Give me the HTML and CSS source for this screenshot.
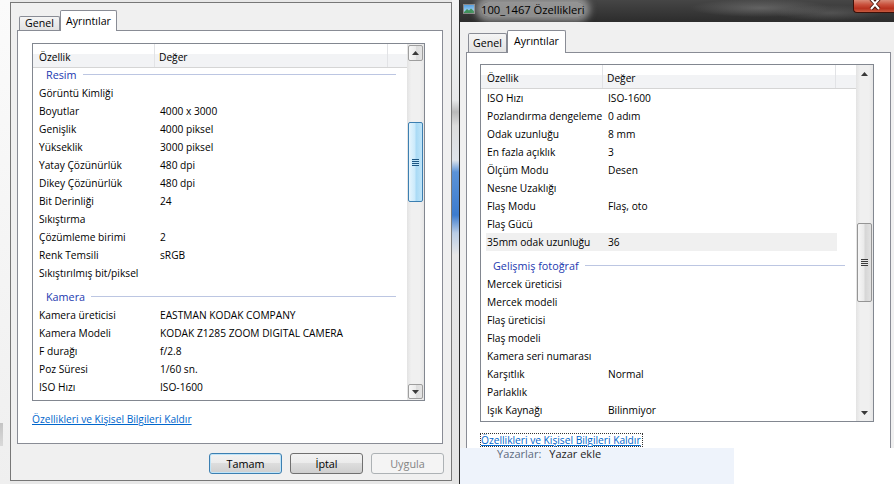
FILE: index.html
```html
<!DOCTYPE html>
<html lang="tr">
<head>
<meta charset="utf-8">
<title>100_1467 Özellikleri</title>
<link rel="stylesheet" href="styles.css">
</head>
<body>
<div class="screen">
  <div class="edge"></div>

  <section class="dlg-l">
    <div class="tabs">
      <div class="tab">Genel</div>
      <div class="tab sel">Ayrıntılar</div>
    </div>
    <div class="panel">
      <div class="list">
        <div class="lc">
          <div class="lhead"><div class="h1">Özellik</div><div class="h2">Değer</div><div class="h3"></div></div>
          <div class="rows scrolled">
            <div class="grp"><span>Resim</span><i></i></div>
            <div class="row"><span class="c1">Görüntü Kimliği</span><span class="c2"></span></div>
            <div class="row"><span class="c1">Boyutlar</span><span class="c2">4000 x 3000</span></div>
            <div class="row"><span class="c1">Genişlik</span><span class="c2">4000 piksel</span></div>
            <div class="row"><span class="c1">Yükseklik</span><span class="c2">3000 piksel</span></div>
            <div class="row"><span class="c1">Yatay Çözünürlük</span><span class="c2">480 dpi</span></div>
            <div class="row"><span class="c1">Dikey Çözünürlük</span><span class="c2">480 dpi</span></div>
            <div class="row"><span class="c1">Bit Derinliği</span><span class="c2">24</span></div>
            <div class="row"><span class="c1">Sıkıştırma</span><span class="c2"></span></div>
            <div class="row"><span class="c1">Çözümleme birimi</span><span class="c2">2</span></div>
            <div class="row"><span class="c1">Renk Temsili</span><span class="c2">sRGB</span></div>
            <div class="row"><span class="c1">Sıkıştırılmış bit/piksel</span><span class="c2"></span></div>
            <div class="grp"><span>Kamera</span><i></i></div>
            <div class="row"><span class="c1">Kamera üreticisi</span><span class="c2">EASTMAN KODAK COMPANY</span></div>
            <div class="row"><span class="c1">Kamera Modeli</span><span class="c2">KODAK Z1285 ZOOM DIGITAL CAMERA</span></div>
            <div class="row"><span class="c1">F durağı</span><span class="c2">f/2.8</span></div>
            <div class="row"><span class="c1">Poz Süresi</span><span class="c2">1/60 sn.</span></div>
            <div class="row"><span class="c1">ISO Hızı</span><span class="c2">ISO-1600</span></div>
          </div>
        </div>
        <div class="sb sb-l">
          <div class="sbtn box"><svg width="7" height="4" viewBox="0 0 7 4"><polygon points="0,4 3.5,0 7,4" fill="#3a3a3a"/></svg></div>
          <div class="thumb thumb-blue"><span class="grip"></span></div>
          <div class="sbtn box down"><svg width="7" height="4" viewBox="0 0 7 4"><polygon points="0,0 7,0 3.5,4" fill="#3a3a3a"/></svg></div>
        </div>
      </div>
      <a class="link link-l" href="#">Özellikleri ve Kişisel Bilgileri Kaldır</a>
    </div>
    <div class="buttons">
      <button class="btn def">Tamam</button>
      <button class="btn">İptal</button>
      <button class="btn dis">Uygula</button>
    </div>
  </section>

  <div class="glass"></div>

  <section class="win">
    <header class="title">
      <svg class="ticon" width="12" height="10" viewBox="0 0 12 10">
        <defs><linearGradient id="sky" x1="0" y1="0" x2="0" y2="1"><stop offset="0" stop-color="#4d9be0"/><stop offset="1" stop-color="#bfe3f7"/></linearGradient></defs>
        <rect x="0.5" y="0.5" width="11" height="9" fill="url(#sky)" stroke="#8a8a8a"/>
        <polygon points="1,8 4,5 6,6.5 8,4.5 11,7 11,9 1,9" fill="#3f8f5a"/>
      </svg>
      <span class="ttext">100_1467 Özellikleri</span>
      <div class="close"><svg width="14" height="10" viewBox="0 0 14 10"><path d="M3 -1 L7 3 L11 -1 M3 9 L7 5 L11 9" stroke="#4a1a12" stroke-width="4" fill="none"/><path d="M3 -1 L7 3.5 L11 -1 M3 9 L7 4.5 L11 9" stroke="#fff" stroke-width="2" fill="none"/></svg></div>
    </header>
    <div class="wbody">
      <div class="tabs">
        <div class="tab">Genel</div>
        <div class="tab sel">Ayrıntılar</div>
      </div>
      <div class="panel">
        <div class="list">
          <div class="lc">
            <div class="lhead"><div class="h1">Özellik</div><div class="h2">Değer</div><div class="h3"></div></div>
            <div class="rows">
              <div class="row"><span class="c1">ISO Hızı</span><span class="c2">ISO-1600</span></div>
              <div class="row"><span class="c1">Pozlandırma dengeleme</span><span class="c2">0 adım</span></div>
              <div class="row"><span class="c1">Odak uzunluğu</span><span class="c2">8 mm</span></div>
              <div class="row"><span class="c1">En fazla açıklık</span><span class="c2">3</span></div>
              <div class="row"><span class="c1">Ölçüm Modu</span><span class="c2">Desen</span></div>
              <div class="row"><span class="c1">Nesne Uzaklığı</span><span class="c2"></span></div>
              <div class="row"><span class="c1">Flaş Modu</span><span class="c2">Flaş, oto</span></div>
              <div class="row"><span class="c1">Flaş Gücü</span><span class="c2"></span></div>
              <div class="row hl"><span class="c1">35mm odak uzunluğu</span><span class="c2">36</span></div>
              <div class="grp"><span>Gelişmiş fotoğraf</span><i></i></div>
              <div class="row"><span class="c1">Mercek üreticisi</span><span class="c2"></span></div>
              <div class="row"><span class="c1">Mercek modeli</span><span class="c2"></span></div>
              <div class="row"><span class="c1">Flaş üreticisi</span><span class="c2"></span></div>
              <div class="row"><span class="c1">Flaş modeli</span><span class="c2"></span></div>
              <div class="row"><span class="c1">Kamera seri numarası</span><span class="c2"></span></div>
              <div class="row"><span class="c1">Karşıtlık</span><span class="c2">Normal</span></div>
              <div class="row"><span class="c1">Parlaklık</span><span class="c2"></span></div>
              <div class="row"><span class="c1">Işık Kaynağı</span><span class="c2">Bilinmiyor</span></div>
            </div>
          </div>
          <div class="sb sb-r">
            <div class="sbtn"><svg width="7" height="4" viewBox="0 0 7 4"><polygon points="0,4 3.5,0 7,4" fill="#3a3a3a"/></svg></div>
            <div class="thumb thumb-gray"><span class="grip"></span></div>
            <div class="sbtn down"><svg width="7" height="4" viewBox="0 0 7 4"><polygon points="0,0 7,0 3.5,4" fill="#3a3a3a"/></svg></div>
          </div>
        </div>
        <a class="link link-r" href="#">Özellikleri ve Kişisel Bilgileri Kaldır</a>
      </div>
    </div>
    <div class="info">
      <div class="infobox"><span class="lbl">Yazarlar:</span><span class="val">Yazar ekle</span></div>
    </div>
  </section>
</div>
</body>
</html>
```

FILE: styles.css
```css
* { box-sizing: border-box; }
html, body { margin: 0; padding: 0; }
body {
  width: 894px;
  height: 484px;
  overflow: hidden;
  background: #e8e8e8;
  font-family: "Open Sans", "Noto Sans", sans-serif;
  font-size: 10.2px;
  color: #000;
}
.screen { display: flex; height: 484px; }

.edge {
  width: 10px;
  background:
    linear-gradient(to bottom, transparent 423px, #c4c4c4 423px, #dadada 446px, transparent 446px) 0 0 / 3px 100% no-repeat,
    linear-gradient(#fbfbfb, #efefef);
}

/* ---------- left dialog ---------- */
.dlg-l {
  width: 442px;
  height: 479px;
  margin-top: 2px;
  border: 1px solid #777;
  background: #f0f0f0;
  padding: 7px 8px 0 6px;
  display: flex;
  flex-direction: column;
}

.tabs { display: flex; align-items: flex-end; padding-left: 2px; }
.tab {
  border: 1px solid #898c95;
  border-bottom: none;
  border-radius: 2px 2px 0 0;
  background: linear-gradient(#f5f5f5, #e2e2e2);
  text-align: center;
  white-space: nowrap;
  font-size: 10.6px;
}
.tab.sel {
  background: #fff;
  margin-bottom: -1px;
  position: relative;
  z-index: 1;
}
.dlg-l .tabs { height: 20px; }
.dlg-l .tab { width: 41px; height: 14px; line-height: 13px; }
.dlg-l .tab.sel { width: 57px; height: 21px; line-height: 20px; }

.panel {
  background: #fff;
  border: 1px solid #898c95;
  display: flex;
  flex-direction: column;
  align-items: flex-start;
}
.dlg-l .panel { height: 414px; padding: 12px 0 0 14px; }

.list {
  width: 393px;
  height: 358px;
  border: 1px solid #828790;
  display: flex;
  background: #fff;
  flex: none;
}
.win .list { width: 394px; }
.lc { flex: 1; min-width: 0; overflow: hidden; display: flex; flex-direction: column; }
.lhead {
  height: 24px;
  flex: none;
  display: flex;
  border-bottom: 1px solid #d5d5d5;
  background: linear-gradient(#fff 0, #fff 10px, #f2f3f5 10px, #f2f3f5 100%);
  line-height: 26px;
}
.h1 { width: 122px; padding-left: 6px; border-right: 1px solid #e2e3e6; }
.h2 { width: 233px; padding-left: 4px; border-right: 1px solid #e2e3e6; }
.h3 { flex: 1; }

.rows { display: flex; flex-direction: column; }
.rows.scrolled { margin-top: -8px; }
.row {
  display: flex;
  height: 18px;
  line-height: 18px;
  margin-left: 5px;
  width: 351px;
  flex: none;
  white-space: nowrap;
}
.row.hl { background: #f0f0f0; }
.c1 { width: 117px; padding-left: 1px; overflow: hidden; }
.c2 { flex: 1; padding-left: 5px; overflow: hidden; }

.grp {
  height: 24px;
  flex: none;
  display: flex;
  align-items: center;
  padding: 4px 11px 0 13px;
  color: #2339b0;
  font-size: 10.8px;
}
.win .grp { padding-left: 12px; }
.grp i { flex: 1; height: 1px; background: #bcc6e2; margin-left: 6px; }

/* scrollbars */
.sb {
  width: 17px;
  flex: none;
  display: flex;
  flex-direction: column;
  background: linear-gradient(90deg, #e3e3e3, #f0f0f0 25%, #f0f0f0 75%, #e6e6e6);
}
.sbtn {
  height: 17px;
  flex: none;
  display: flex;
  align-items: center;
  justify-content: center;
}
.sbtn svg { display: block; }
.sbtn.down { margin-top: auto; }
.sbtn.box {
  margin: 1px 1px 0;
  height: 16px;
  border: 1px solid #9e9e9e;
  border-radius: 2px;
  background: linear-gradient(90deg, #f7f7f7, #ececec 50%, #dcdcdc 50%, #e4e4e4);
}
.sbtn.box.down { margin: auto 1px 1px; height: 15px; }
.thumb {
  margin: 0 1px;
  border-radius: 2px;
  display: flex;
  align-items: center;
  justify-content: center;
  flex: none;
}
.sb-l .thumb { margin-top: 61px; height: 80px; }
.sb-r .thumb { margin-top: 141px; height: 79px; }
.thumb-blue {
  border: 1px solid #3c7fb1;
  background: linear-gradient(90deg, #e6f5fd, #cbeafb 45%, #a9daf5 55%, #bfe5f9);
}
.thumb-gray {
  border: 1px solid #959595;
  background: linear-gradient(90deg, #f6f6f6, #eaeaea 45%, #d6d6d6 55%, #e2e2e2);
}
.grip { width: 7px; height: 7px; }
.thumb-blue .grip { background: repeating-linear-gradient(#1d5784 0 1px, #bfe6fa 1px 2px); }
.thumb-gray .grip { background: repeating-linear-gradient(#3b3b3b 0 1px, #e6e6e6 1px 2px); }

.link { color: #0066cc; white-space: nowrap; line-height: 14px; }
.link-l { margin-top: 11px; text-decoration: underline; }

/* buttons */
.buttons {
  display: flex;
  justify-content: flex-end;
  gap: 8px;
  margin: 9px -1px 0 0;
}
.btn {
  width: 73px;
  height: 21px;
  border: 1px solid #707070;
  border-radius: 3px;
  background: linear-gradient(#f2f2f2 0, #ebebeb 50%, #dddddd 50%, #cfcfcf 100%);
  font: inherit;
  font-size: 10.8px;
  color: #000;
  padding: 0;
}
.btn.def { border-color: #3c7fb1; box-shadow: inset 0 0 0 1px #bfe4f8; }
.btn.dis { border-color: #adb2b5; background: #f4f4f4; color: #838383; }

/* glass strip */
.glass {
  width: 7px;
  background: linear-gradient(#f3f3f3 0, #e7e8e9 100px, #b9b9b9 112px, #dcdcdc 126px, #dfe4ea 160px, #5b93d8 172px, #3d7ccf 215px, #b9cde6 233px, #e6e6e6 255px, #e4e4e4 100%);
}

/* ---------- right window ---------- */
.win {
  width: 435px;
  border-left: 1px solid #2b2b2b;
  display: flex;
  flex-direction: column;
}
.title {
  height: 22px;
  flex: none;
  display: flex;
  align-items: flex-start;
  background:
    radial-gradient(ellipse 70px 9px at 300px 8px, rgba(130,130,130,.55), transparent),
    radial-gradient(ellipse 55px 8px at 370px 13px, rgba(110,110,110,.5), transparent),
    linear-gradient(#464646, #2c2c2c);
}
.ticon { margin: 4px 0 0 3px; flex: none; }
.ttext {
  margin: 2px 0 0 6px;
  font-size: 11.2px;
  line-height: 15px;
  color: #000;
  background: rgba(215,215,215,.55);
  box-shadow: 0 0 7px 5px rgba(215,215,215,.55);
  border-radius: 8px;
  white-space: nowrap;
}
.close {
  margin-left: auto;
  width: 41px;
  height: 13px;
  border: 1px solid #3d1008;
  border-top: none;
  border-right: none;
  border-radius: 0 0 0 4px;
  background: linear-gradient(#d98a77, #c94f3b 40%, #b8321f 70%, #c65a3f);
  display: flex;
  justify-content: center;
  padding-left: 2px;
}
.close svg { display: block; }

.wbody {
  height: 426px;
  flex: none;
  background: #f0f0f0;
  padding: 8px 0 0 6px;
  display: flex;
  flex-direction: column;
  overflow: hidden;
}
.wbody .tabs { height: 22px; }
.wbody .tab { width: 39px; height: 19px; line-height: 19px; }
.wbody .tab.sel { width: 59px; height: 23px; line-height: 21px; }
.wbody .panel {
  width: 425px;
  flex: 1;
  border-bottom: none;
  padding: 11px 0 0 13px;
}
.link-r {
  margin-top: 11px;
  border: 1px dotted #333;
  padding: 0 1px 0 0;
  line-height: 12px;
}

.info { height: 36px; flex: none; background: #fff; display: flex; }
.infobox {
  width: 274px;
  background: #eef3fb;
  padding-left: 37px;
  font-size: 11px;
  line-height: 11px;
  white-space: nowrap;
}
.lbl { color: #5c6a80; margin-right: 8px; }
.val { color: #1e1e1e; }
```
